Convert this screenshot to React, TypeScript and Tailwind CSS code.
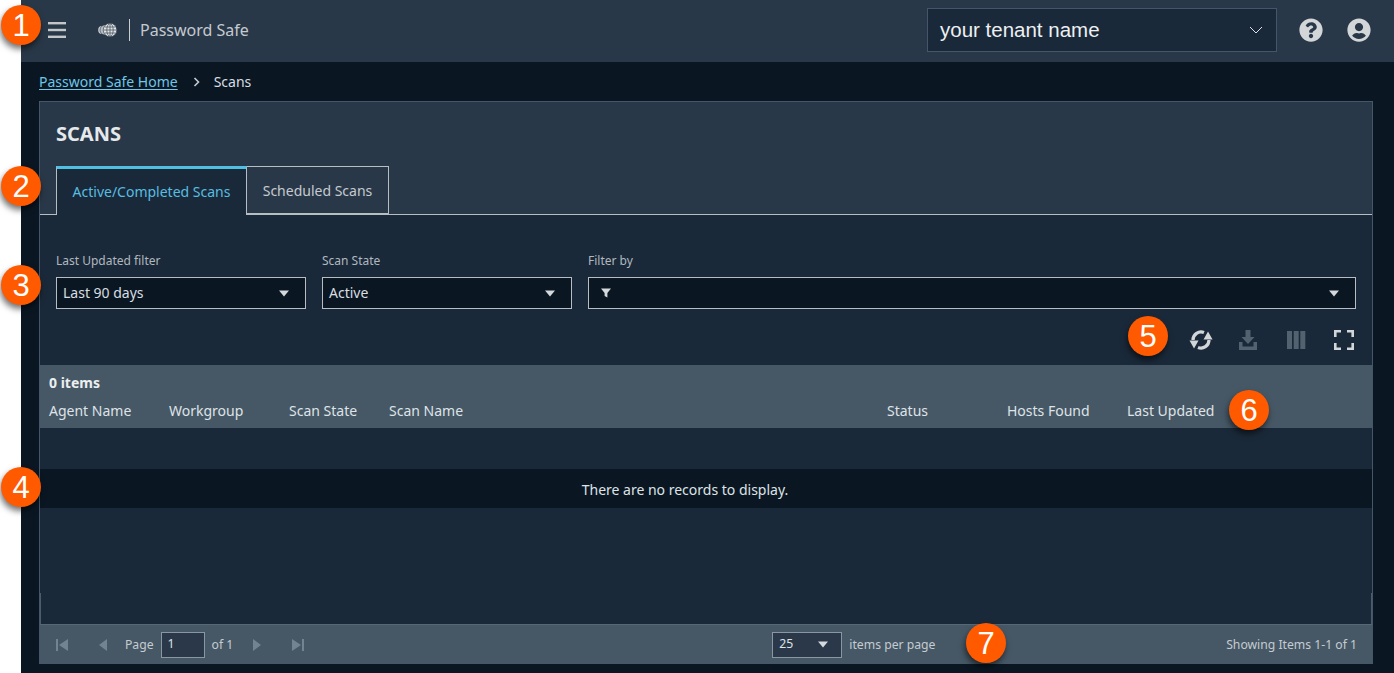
import React from "react";
import { FaQuestionCircle, FaUserCircle } from "react-icons/fa";

const Badge = ({ n, className }: { n: number; className: string }) => (
  <div className={`absolute flex h-10 w-10 items-center justify-center rounded-full bg-[#ff5a00] font-['Liberation_Sans',sans-serif] text-[31px] leading-none text-white shadow-[-1px_4px_6px_rgba(0,0,0,0.55)] ${className}`}>
    {n}
  </div>
);

const Caret = () => (
  <svg width="12" height="7" viewBox="0 0 12 7" className="fill-[#d5d9dc]"><path d="M1 0.5h10L6 6.5z" /></svg>
);

const Select = ({ label, value, className, icon }: { label: string; value?: string; className: string; icon?: boolean }) => (
  <div className={`flex flex-col ${className}`}>
    <div className="mb-[9px] h-[15px] text-[12px] leading-[15px] text-[#b0b8bf]">{label}</div>
    <div className="flex h-[32px] items-center justify-between border border-[#b7bdc2] bg-[#0a1723] pl-[6px] pr-[15px] text-[14px] text-[#d9dde0]">
      <span className="flex items-center pb-[2px]">
        {icon && (
          <svg width="12" height="12" viewBox="0 0 12 12" className="ml-[5px] mt-[2px] fill-[#d5d9dc]"><path d="M1 1.500h10L7.400 6v4.500L4.600 9V6z" /></svg>
        )}
        {value}
      </span>
      <Caret />
    </div>
  </div>
);

const PagerIcon = ({ d }: { d: string }) => (
  <svg width="14" height="14" viewBox="0 0 14 14" className="fill-[#728391]"><path d={d} /></svg>
);

export default function App() {
  return (
    <div className="relative flex h-[673px] w-[1394px] overflow-hidden bg-white font-['Noto_Sans','Open_Sans',sans-serif]">
      <div className="w-[21px] shrink-0 bg-white" />
      <div className="flex min-w-0 flex-1 flex-col bg-[#0a1723]">
        <header className="flex h-[62px] shrink-0 items-center bg-[#293848] pr-[23px] pb-[2px]">
          <svg width="18" height="16" viewBox="0 0 18 16" className="ml-[27px] fill-[#c3c7ca]">
            <rect y="0" width="18" height="2.400" /><rect y="6.800" width="18" height="2.400" /><rect y="13.600" width="18" height="2.400" />
          </svg>
          <svg width="20" height="16" viewBox="0 0 20 16" className="ml-[32px]">
            <ellipse cx="4" cy="8" rx="3.800" ry="4" fill="#c9cdd0" />
            <circle cx="7" cy="8" r="5" fill="#b9bdc1" stroke="#293848" strokeWidth="0.600" />
            <circle cx="12" cy="8" r="6.800" fill="#e2e4e6" stroke="#293848" strokeWidth="0.600" />
            <g stroke="#4a5561" strokeWidth="0.800" fill="none">
              <ellipse cx="12" cy="8" rx="3.200" ry="6.400" />
              <path d="M12 1.500v13M5.600 8h12.800M6.400 5h11.200M6.400 11h11.200" />
            </g>
          </svg>
          <div className="ml-[11px] h-[22px] w-px bg-[#c9cdd0]" />
          <div className="ml-[10px] text-[16px] text-[#c5cad0]">Password Safe</div>
          <div className="ml-auto flex h-[44px] w-[350px] items-center justify-between border border-[#45566a] bg-[#1a2939] pl-[12px] pr-[13px] font-['Liberation_Sans',sans-serif] text-[20.500px] text-[#eef0f2]">
            <span>your tenant name</span>
            <svg width="14" height="8" viewBox="0 0 14 8" fill="none" stroke="#dfe2e5" strokeWidth="1"><path d="M1 1l6 6 6-6" /></svg>
          </div>
          <FaQuestionCircle className="ml-[22px] text-[24px] text-[#d3d6d8]" />
          <FaUserCircle className="ml-[24px] text-[24px] text-[#d3d6d8]" />
        </header>

        <nav className="flex h-[39px] shrink-0 items-center pl-[18px] text-[14px]">
          <span className="text-[#6fc6e6] underline underline-offset-2">Password Safe Home</span>
          <svg width="7" height="10" viewBox="0 0 7 10" fill="none" stroke="#c5cad0" strokeWidth="1.600" className="ml-[15px]"><path d="M1.500 1l4 4-4 4" /></svg>
          <span className="ml-[14px] text-[#d9dde0]">Scans</span>
        </nav>

        <main className="ml-[18px] flex h-[563px] w-[1334px] shrink-0 flex-col border border-[#45566a] border-b-[#465866] bg-[#1a2939]">
          <div className="h-[113px] shrink-0 border-b border-[#b7bdc2] bg-[#293848] pl-[16px]">
            <h1 className="h-[64px] pt-[18px] text-[20px] leading-[28px] font-bold text-[#e6e9eb]">SCANS</h1>
            <div className="flex h-[49px]">
              <div className="flex h-[49px] w-[191px] items-center justify-center border-x border-t-[3px] border-x-[#b7bdc2] border-t-[#4fc0e4] bg-[#1a2939] pb-[1px] text-[14px] text-[#58bde0]">
                Active/Completed Scans
              </div>
              <div className="flex h-[48px] w-[142px] items-center justify-center border-y border-r border-[#b7bdc2] text-[14px] text-[#c5cad0]">
                Scheduled Scans
              </div>
            </div>
          </div>

          <div className="flex h-[95px] shrink-0 gap-[16px] px-[16px] pt-[38px]">
            <Select label="Last Updated filter" value="Last 90 days" className="w-[250px]" />
            <Select label="Scan State" value="Active" className="w-[250px]" />
            <Select label="Filter by" className="flex-1" icon />
          </div>

          <div className="flex h-[55px] shrink-0 items-center justify-end pt-[5px] pr-[18px]">
            <svg width="24" height="20" viewBox="0 0 24 20" className="mr-[25px]">
              <g fill="none" stroke="#d3d6d8" strokeWidth="3.200">
                <path d="M4 10A8 8 0 0 1 15 2.600" />
                <path d="M20 10A8 8 0 0 1 9 17.400" />
              </g>
              <g fill="#d3d6d8">
                <path d="M19 1.500l4.500 8h-9z" />
                <path d="M5 18.500L0.500 10.500h9z" />
              </g>
            </svg>
            <svg width="20" height="20" viewBox="0 0 20 20" className="mr-[28px] fill-[#53626f]">
              <path d="M7.500 0h5v7h4L10 14 3.500 7h4z" /><path d="M1 12h3.500v4.500h11V12H19v8H1z" />
            </svg>
            <svg width="20" height="18" viewBox="0 0 20 18" className="mr-[28px] fill-[#53626f]">
              <rect x="1" width="5" height="18" /><rect x="7.700" width="5" height="18" /><rect x="14.300" width="5" height="18" />
            </svg>
            <svg width="20" height="20" viewBox="0 0 20 20" fill="none" stroke="#d3d6d8" strokeWidth="2.600">
              <path d="M1.300 7V1.300H7M13 1.300h5.700V7M18.700 13v5.700H13M7 18.700H1.300V13" />
            </svg>
          </div>

          <div className="h-[63px] shrink-0 bg-[#465866] pl-[9px] text-[14px] text-[#dfe3e6]">
            <div className="h-[35px] pt-[7px] text-[14px] leading-[22px] font-bold text-[#eceef0]">0 items</div>
            <div className="grid grid-cols-[120px_120px_100px_498px_120px_120px_120px] leading-[22px]">
              <span>Agent Name</span><span>Workgroup</span><span>Scan State</span><span>Scan Name</span><span>Status</span><span>Hosts Found</span><span>Last Updated</span>
            </div>
          </div>

          <div className="flex min-h-0 flex-1 flex-col">
            <div className="h-[41px] shrink-0" />
            <div className="flex h-[39px] shrink-0 items-center justify-center bg-[#0a1723] pt-[2px] pr-[42px] text-[14px] text-[#dfe3e6]">There are no records to display.</div>
            <div className="mt-auto h-[31px] shrink-0 border-x border-[#4b5d6b]" />
          </div>

          <footer className="flex h-[39px] shrink-0 items-center border-t border-[#566776] bg-[#465866] pt-[1px] text-[12.200px] text-[#c5cbd0]">
            <div className="flex items-center">
              <div className="ml-[15px]"><PagerIcon d="M1 1h2v12H1zM13 1v12L4 7z" /></div>
              <div className="ml-[27px]"><PagerIcon d="M11 1v12L3 7z" /></div>
              <span className="ml-[15px] pt-[2px]">Page</span>
              <div className="ml-[7px] flex h-[26px] w-[44px] items-center border border-[#8a97a2] bg-[#2a3849] pl-[6px] text-[#dfe3e6]">1</div>
              <span className="ml-[7px] pt-[2px]">of 1</span>
              <div className="ml-[17px]"><PagerIcon d="M3 1v12l8-6z" /></div>
              <div className="ml-[27px]"><PagerIcon d="M1 1v12l9-6zM11 1h2v12h-2z" /></div>
            </div>
            <div className="ml-[467px] flex h-[26px] w-[70px] items-center justify-between border border-[#8a97a2] bg-[#2a3849] pl-[6px] pr-[12px] text-[#dfe3e6]">
              <span>25</span><Caret />
            </div>
            <span className="ml-[7px] pt-[2px]">items per page</span>
            <span className="mr-[15px] ml-auto pt-[2px]">Showing Items 1-1 of 1</span>
          </footer>
        </main>
      </div>

      <Badge n={1} className="left-[1px] top-[5px]" />
      <Badge n={2} className="left-[1px] top-[166px]" />
      <Badge n={3} className="left-[1px] top-[265px]" />
      <Badge n={4} className="left-[1px] top-[467px]" />
      <Badge n={5} className="left-[1128px] top-[316px]" />
      <Badge n={6} className="left-[1229px] top-[390px]" />
      <Badge n={7} className="left-[966px] top-[623px]" />
    </div>
  );
}
